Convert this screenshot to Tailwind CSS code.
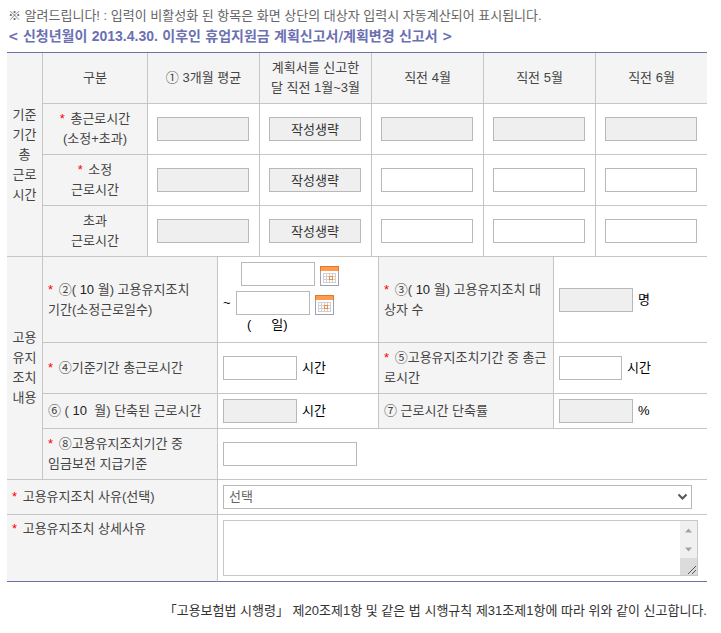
<!DOCTYPE html>
<html lang="ko">
<head>
    <meta charset="UTF-8">
    <meta name="viewport" content="width=device-width, initial-scale=1.0">
    <title>휴업지원금 계획신고서</title>
    <script src="https://cdn.jsdelivr.net/npm/@tailwindcss/browser@4"></script>
</head>
<body class="bg-white pl-[7px] pr-3.5 pt-1.5 font-['Liberation_Sans','Noto_Sans_CJK_KR',sans-serif] text-[13px] leading-5 text-[#444]">
    <p class="pl-px text-[#666]">※ 알려드립니다! : 입력이 비활성화 된 항목은 화면 상단의 대상자 입력시 자동계산되어 표시됩니다.</p>
    <h2 class="mb-1.5 pl-px font-['DejaVu_Sans_Condensed','Noto_Sans_CJK_KR',sans-serif] text-sm leading-5 font-bold text-[#6b70b3]">&lt; 신청년월이 <span class="font-['Liberation_Sans',sans-serif]">2013.4.30.</span> 이후인 휴업지원금 계획신고서/계획변경 신고서 &gt;</h2>

    <!-- 기준기간 총 근로시간 -->
    <table class="w-full table-fixed border-separate border-spacing-0 border-t border-[#6b72a8] text-center">
        <colgroup>
            <col class="w-[35px]">
            <col class="w-[105px]">
            <col><col><col><col><col>
        </colgroup>
        <tbody>
            <tr class="h-[51px]">
                <th rowspan="4" scope="rowgroup" class="border-b border-[#c5c5c5] bg-[#f4f4f4] font-normal">기준<br>기간<br>총<br>근로<br>시간</th>
                <th scope="col" class="border-b border-l border-[#c5c5c5] bg-[#f4f4f4] font-normal">구분</th>
                <th scope="col" class="border-b border-l border-[#c5c5c5] bg-[#f4f4f4] font-normal">① 3개월 평균</th>
                <th scope="col" class="border-b border-l border-[#c5c5c5] bg-[#f4f4f4] font-normal">계획서를 신고한<br>달 직전 1월~3월</th>
                <th scope="col" class="border-b border-l border-[#c5c5c5] bg-[#f4f4f4] font-normal">직전 4월</th>
                <th scope="col" class="border-b border-l border-[#c5c5c5] bg-[#f4f4f4] font-normal">직전 5월</th>
                <th scope="col" class="border-b border-l border-[#c5c5c5] bg-[#f4f4f4] font-normal">직전 6월</th>
            </tr>
            <tr class="h-[51px]">
                <th scope="row" class="border-b border-l border-[#c5c5c5] bg-[#f4f4f4] font-normal"><span class="mr-0.5 text-[#f00]">*</span> 총근로시간<br>(소정+초과)</th>
                <td class="border-b border-l border-[#c5c5c5] pr-2.5 pl-[9px]"><input type="text" aria-label="총근로시간 3개월 평균" disabled class="block h-6 w-full border border-[#b8b8b8] bg-[#efefef]"></td>
                <td class="border-b border-l border-[#c5c5c5] pr-2.5 pl-[9px]"><input type="text" aria-label="총근로시간 1월~3월" readonly value="작성생략" class="block h-6 w-full border border-[#b8b8b8] bg-[#efefef] pb-0.5 text-center text-[#333]"></td>
                <td class="border-b border-l border-[#c5c5c5] pr-2.5 pl-[9px]"><input type="text" aria-label="총근로시간 4월" disabled class="block h-6 w-full border border-[#b8b8b8] bg-[#efefef]"></td>
                <td class="border-b border-l border-[#c5c5c5] pr-2.5 pl-[9px]"><input type="text" aria-label="총근로시간 5월" disabled class="block h-6 w-full border border-[#b8b8b8] bg-[#efefef]"></td>
                <td class="border-b border-l border-[#c5c5c5] pr-2.5 pl-[9px]"><input type="text" aria-label="총근로시간 6월" disabled class="block h-6 w-full border border-[#b8b8b8] bg-[#efefef]"></td>
            </tr>
            <tr class="h-[51px]">
                <th scope="row" class="border-b border-l border-[#c5c5c5] bg-[#f4f4f4] font-normal"><span class="mr-0.5 text-[#f00]">*</span> 소정<br>근로시간</th>
                <td class="border-b border-l border-[#c5c5c5] pr-2.5 pl-[9px]"><input type="text" aria-label="소정근로시간 3개월 평균" disabled class="block h-6 w-full border border-[#b8b8b8] bg-[#efefef]"></td>
                <td class="border-b border-l border-[#c5c5c5] pr-2.5 pl-[9px]"><input type="text" aria-label="소정근로시간 1월~3월" readonly value="작성생략" class="block h-6 w-full border border-[#b8b8b8] bg-[#efefef] pb-0.5 text-center text-[#333]"></td>
                <td class="border-b border-l border-[#c5c5c5] pr-2.5 pl-[9px]"><input type="text" aria-label="소정근로시간 4월" class="block h-6 w-full border border-[#b8b8b8] bg-white px-1"></td>
                <td class="border-b border-l border-[#c5c5c5] pr-2.5 pl-[9px]"><input type="text" aria-label="소정근로시간 5월" class="block h-6 w-full border border-[#b8b8b8] bg-white px-1"></td>
                <td class="border-b border-l border-[#c5c5c5] pr-2.5 pl-[9px]"><input type="text" aria-label="소정근로시간 6월" class="block h-6 w-full border border-[#b8b8b8] bg-white px-1"></td>
            </tr>
            <tr class="h-[51px]">
                <th scope="row" class="border-b border-l border-[#c5c5c5] bg-[#f4f4f4] font-normal">초과<br>근로시간</th>
                <td class="border-b border-l border-[#c5c5c5] pr-2.5 pl-[9px]"><input type="text" aria-label="초과근로시간 3개월 평균" disabled class="block h-6 w-full border border-[#b8b8b8] bg-[#efefef]"></td>
                <td class="border-b border-l border-[#c5c5c5] pr-2.5 pl-[9px]"><input type="text" aria-label="초과근로시간 1월~3월" readonly value="작성생략" class="block h-6 w-full border border-[#b8b8b8] bg-[#efefef] pb-0.5 text-center text-[#333]"></td>
                <td class="border-b border-l border-[#c5c5c5] pr-2.5 pl-[9px]"><input type="text" aria-label="초과근로시간 4월" class="block h-6 w-full border border-[#b8b8b8] bg-white px-1"></td>
                <td class="border-b border-l border-[#c5c5c5] pr-2.5 pl-[9px]"><input type="text" aria-label="초과근로시간 5월" class="block h-6 w-full border border-[#b8b8b8] bg-white px-1"></td>
                <td class="border-b border-l border-[#c5c5c5] pr-2.5 pl-[9px]"><input type="text" aria-label="초과근로시간 6월" class="block h-6 w-full border border-[#b8b8b8] bg-white px-1"></td>
            </tr>
        </tbody>
    </table>

    <!-- 고용유지조치 내용 -->
    <table class="w-full table-fixed border-separate border-spacing-0 text-left">
        <colgroup>
            <col class="w-[35px]">
            <col class="w-[175px]">
            <col>
            <col class="w-[175px]">
            <col class="w-[154px]">
        </colgroup>
        <tbody>
            <tr class="h-[86px]">
                <th rowspan="4" scope="rowgroup" class="border-b border-[#c5c5c5] bg-[#f4f4f4] text-center font-normal">고용<br>유지<br>조치<br>내용</th>
                <th scope="row" class="border-b border-l border-[#c5c5c5] bg-[#f4f4f4] pl-[5px] font-normal"><label for="startDate"><span class="mr-0.5 text-[#f00]">*</span> ②( <span class="text-[#222]">10</span> 월) 고용유지조치<br>기간(소정근로일수)</label></th>
                <td class="border-b border-l border-[#c5c5c5] pt-[5px] pl-[5px] align-top text-black">
                    <div class="mb-[5px] flex items-end gap-[5px] pl-[18px]">
                        <input type="text" id="startDate" class="h-6 w-[74px] border border-[#b8b8b8] bg-white px-1">
                        <button type="button" aria-label="시작일 선택">
                            <svg class="block" width="19" height="20" viewBox="0 0 19 20" shape-rendering="crispEdges">
                                <rect x=".5" y=".5" width="18" height="19" fill="#fff" stroke="#9ca1b3"/>
                                <rect width="19" height="5" fill="#e07a33"/>
                                <rect x="1" y="1" width="17" height="4" fill="#ff9b4d"/>
                                <path d="M3 7.5h13M3 10.5h13M3 13.5h13M3 16.5h13M3.500 7v10M6.500 7v10M9.500 7v10M12.500 7v10M15.500 7v10" stroke="#d0d0d0" fill="none"/>
                                <rect x="9.500" y="10.500" width="3" height="3" fill="#fff" stroke="#f58a35"/>
                            </svg>
                        </button>
                    </div>
                    <div class="flex items-end gap-[5px]">
                        <span class="w-2 self-center">~</span>
                        <input type="text" aria-label="종료일" class="h-6 w-[74px] border border-[#b8b8b8] bg-white px-1">
                        <button type="button" aria-label="종료일 선택">
                            <svg class="block" width="19" height="20" viewBox="0 0 19 20" shape-rendering="crispEdges">
                                <rect x=".5" y=".5" width="18" height="19" fill="#fff" stroke="#9ca1b3"/>
                                <rect width="19" height="5" fill="#e07a33"/>
                                <rect x="1" y="1" width="17" height="4" fill="#ff9b4d"/>
                                <path d="M3 7.5h13M3 10.5h13M3 13.5h13M3 16.5h13M3.500 7v10M6.500 7v10M9.500 7v10M12.500 7v10M15.500 7v10" stroke="#d0d0d0" fill="none"/>
                                <rect x="9.500" y="10.500" width="3" height="3" fill="#fff" stroke="#f58a35"/>
                            </svg>
                        </button>
                    </div>
                    <div class="flex gap-5 pl-6"><span>(</span><span>일)</span></div>
                </td>
                <th scope="row" class="border-b border-l border-[#c5c5c5] bg-[#f4f4f4] pl-[5px] font-normal"><label for="people"><span class="mr-0.5 text-[#f00]">*</span> ③( <span class="text-[#222]">10</span> 월) 고용유지조치 대<br>상자 수</label></th>
                <td class="border-b border-l border-[#c5c5c5] pl-[5px] text-black">
                    <div class="flex items-center gap-[5px]"><input type="text" id="people" disabled class="h-6 w-[74px] border border-[#b8b8b8] bg-[#efefef]"><span>명</span></div>
                </td>
            </tr>
            <tr class="h-[51px]">
                <th scope="row" class="border-b border-l border-[#c5c5c5] bg-[#f4f4f4] pl-[5px] font-normal"><label for="baseHours"><span class="mr-0.5 text-[#f00]">*</span> ④기준기간 총근로시간</label></th>
                <td class="border-b border-l border-[#c5c5c5] pl-[5px] text-black">
                    <div class="flex items-center gap-[5px]"><input type="text" id="baseHours" class="h-6 w-[74px] border border-[#b8b8b8] bg-white px-1"><span>시간</span></div>
                </td>
                <th scope="row" class="border-b border-l border-[#c5c5c5] bg-[#f4f4f4] pl-[5px] font-normal"><label for="keepHours"><span class="mr-0.5 text-[#f00]">*</span> ⑤고용유지조치기간 중 총근<br>로시간</label></th>
                <td class="border-b border-l border-[#c5c5c5] pl-[5px] text-black">
                    <div class="flex items-center gap-[5px]"><input type="text" id="keepHours" class="h-6 w-[63px] border border-[#b8b8b8] bg-white px-1"><span>시간</span></div>
                </td>
            </tr>
            <tr class="h-[35px]">
                <th scope="row" class="border-b border-l border-[#c5c5c5] bg-[#f4f4f4] pl-[5px] font-normal"><label for="cutHours">⑥ ( <span class="text-[#222]">10</span>&nbsp; 월) 단축된 근로시간</label></th>
                <td class="border-b border-l border-[#c5c5c5] pl-[5px] text-black">
                    <div class="flex items-center gap-[5px]"><input type="text" id="cutHours" disabled class="h-6 w-[74px] border border-[#b8b8b8] bg-[#efefef]"><span>시간</span></div>
                </td>
                <th scope="row" class="border-b border-l border-[#c5c5c5] bg-[#f4f4f4] pl-[5px] font-normal"><label for="cutRate">⑦ 근로시간 단축률</label></th>
                <td class="border-b border-l border-[#c5c5c5] pl-[5px] text-black">
                    <div class="flex items-center gap-[5px]"><input type="text" id="cutRate" disabled class="h-6 w-[74px] border border-[#b8b8b8] bg-[#efefef]"><span>%</span></div>
                </td>
            </tr>
            <tr class="h-[51px]">
                <th scope="row" class="border-b border-l border-[#c5c5c5] bg-[#f4f4f4] pl-[5px] font-normal"><label for="payRule"><span class="mr-0.5 text-[#f00]">*</span> ⑧고용유지조치기간 중<br>임금보전 지급기준</label></th>
                <td colspan="3" class="border-b border-l border-[#c5c5c5] pl-[5px]"><input type="text" id="payRule" class="block h-6 w-[134px] border border-[#b8b8b8] bg-white px-1"></td>
            </tr>
            <tr class="h-[35px]">
                <th colspan="2" scope="row" class="border-b border-[#c5c5c5] bg-[#f4f4f4] pl-[5px] font-normal"><label for="reason"><span class="mr-0.5 text-[#f00]">*</span> 고용유지조치 사유(선택)</label></th>
                <td colspan="3" class="border-b border-l border-[#c5c5c5] pr-[15px] pl-[5px]">
                    <div class="relative">
                        <select id="reason" class="block h-6 w-full appearance-none border border-[#b8b8b8] bg-white pl-[5px] text-[#666]">
                            <option>선택</option>
                        </select>
                        <svg class="pointer-events-none absolute top-2 right-1" width="11" height="8" viewBox="0 0 11 8" fill="none" stroke="#555" stroke-width="2"><path d="M1.500 1.500L5.500 5.500L9.500 1.500"/></svg>
                    </div>
                </td>
            </tr>
            <tr class="h-[67px]">
                <th colspan="2" scope="row" class="border-b border-[#6b72a8] bg-[#f4f4f4] pt-1 pl-[5px] align-top font-normal"><label for="detail"><span class="mr-0.5 text-[#f00]">*</span> 고용유지조치 상세사유</label></th>
                <td colspan="3" class="border-b border-l border-b-[#6b72a8] border-l-[#c5c5c5] pr-[9px] pl-[5px]">
                    <div class="relative">
                        <textarea id="detail" class="block h-14 w-full resize-none overflow-hidden border border-[#c8c8c8] bg-white py-1 pr-5 pl-1"></textarea>
                        <svg class="pointer-events-none absolute top-px right-px" width="17" height="54" viewBox="0 0 17 54">
                            <rect width="17" height="37" fill="#f0f0f0"/>
                            <rect y="37" width="17" height="17" fill="#dcdcdc"/>
                            <path d="M5 11.500L8.500 7.500L12 11.500ZM5 26.500L8.500 30.500L12 26.500Z" fill="#a3a3a3"/>
                            <path d="M8 53L16 45M12 53L16 49" stroke="#555" fill="none"/>
                        </svg>
                    </div>
                </td>
            </tr>
        </tbody>
    </table>

    <p class="mt-[19px] text-right text-[#333]">「고용보험법 시행령」 제20조제1항 및 같은 법 시행규칙 제31조제1항에 따라 위와 같이 신고합니다.</p>
</body>
</html>
